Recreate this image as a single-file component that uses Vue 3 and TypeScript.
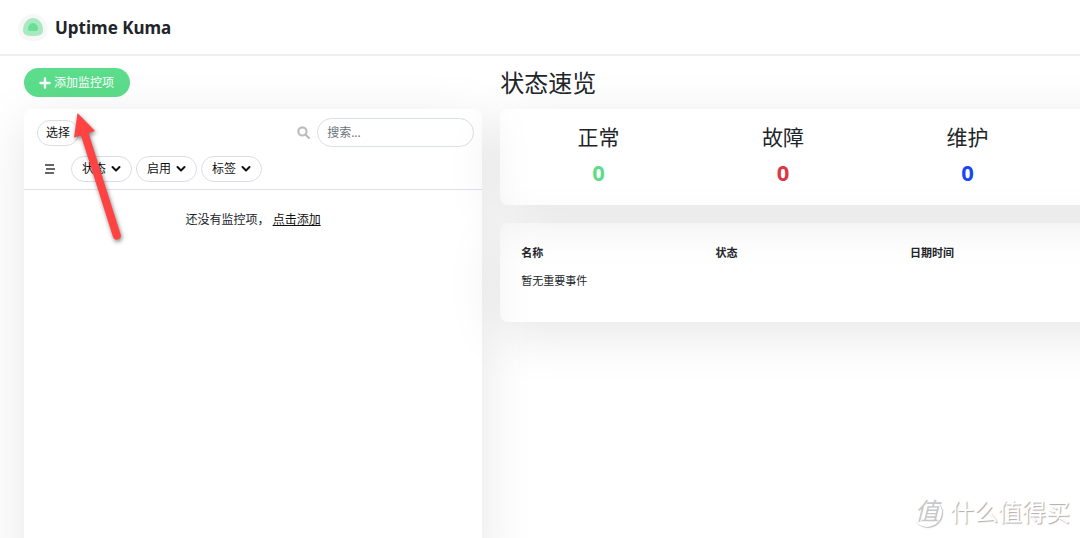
<script setup lang="ts">
import { ref } from 'vue'

interface Stat {
  label: string
  count: number
  tone: string
}

const search = ref('')
const filters: string[] = ['状态', '启用', '标签']
const columns: string[] = ['名称', '状态', '日期时间']
const stats: Stat[] = [
  { label: '正常', count: 0, tone: 'up' },
  { label: '故障', count: 0, tone: 'down' },
  { label: '维护', count: 0, tone: 'maintenance' },
]
</script>

<template>
  <div class="page">
    <header class="topbar">
      <a class="brand" href="#">
        <svg class="logo" viewBox="0 0 30 30" aria-hidden="true">
          <path d="M15 1C23 1 29.500 8 29.500 16C29.500 24 25 28 15 28C5 28 .5 24 .5 16C.5 8 7 1 15 1Z" fill="#f7f7f7" />
          <path d="M15 5C21 5 25 11 25 17C25 21.500 22 23 15 23C8 23 5 21.500 5 17C5 11 9 5 15 5Z" fill="#a9e9c1" />
          <path d="M15 10C18 10 20 13 20 16Q20 18 18 18H12Q10 18 10 16C10 13 12 10 15 10Z" fill="#6be094" />
        </svg>
        <span>Uptime Kuma</span>
      </a>
    </header>

    <main class="workspace">
      <section class="left">
        <button class="add" type="button">
          <svg viewBox="0 0 12 12" aria-hidden="true"><path d="M6 1.500V10.500M1.500 6H10.500" /></svg>
          <span>添加监控项</span>
        </button>

        <div class="card monitors">
          <div class="tools">
            <div class="row">
              <button class="pill select" type="button">选择</button>
              <label class="search">
                <svg viewBox="0 0 12 12" aria-label="搜索"><circle cx="5" cy="5" r="3.800" /><path d="M7.800 7.800L11 11" /></svg>
                <input v-model="search" type="text" placeholder="搜索..." />
              </label>
            </div>
            <div class="row filters">
              <button class="collapse" type="button" aria-label="折叠">
                <svg viewBox="0 0 12 12"><path d="M1 2H10M2 6H11M1 10H10" /></svg>
              </button>
              <button v-for="name in filters" :key="name" class="pill filter" type="button">
                <span>{{ name }}</span>
                <svg viewBox="0 0 10 10" aria-hidden="true"><path d="M1.500 3L5 6.500L8.500 3" /></svg>
              </button>
            </div>
          </div>
          <p class="empty">还没有监控项， <a href="#">点击添加</a></p>
        </div>
      </section>

      <section class="right">
        <h1>状态速览</h1>
        <div class="card stats">
          <div v-for="stat in stats" :key="stat.label" class="stat">
            <h3>{{ stat.label }}</h3>
            <span class="count" :class="stat.tone">{{ stat.count }}</span>
          </div>
        </div>
        <div class="card events">
          <table>
            <colgroup>
              <col v-for="column in columns" :key="column" class="data" />
              <col />
            </colgroup>
            <thead>
              <tr><th v-for="column in columns" :key="column" scope="col">{{ column }}</th></tr>
            </thead>
            <tbody>
              <tr><td colspan="4">暂无重要事件</td></tr>
            </tbody>
          </table>
        </div>
      </section>
    </main>

    <svg class="pointer" viewBox="0 0 60 140" aria-hidden="true">
      <path d="M17.500 13L35 31L28.500 33L60.500 134A4 4 0 0 1 53 137L21 35.500L14 37.500Z" fill="#ff4242" />
    </svg>

    <div class="watermark">
      <span class="seal">值</span>
      <span>什么值得买</span>
    </div>
  </div>
</template>

<style>
body {
  margin: 0;
}
</style>

<style scoped>
.page {
  position: relative;
  height: 100vh;
  overflow: hidden;
  background: #fff;
  color: #212529;
  font-family: "Noto Sans", "Noto Sans CJK SC", sans-serif;
  font-size: 12px;
  line-height: 18px;
}

button,
input {
  box-sizing: border-box;
  font: inherit;
  color: inherit;
}

svg {
  display: block;
  flex: none;
}

.topbar {
  display: flex;
  align-items: center;
  box-sizing: border-box;
  height: 56px;
  padding: 2px 18px 0;
  border-bottom: 2px solid #eee;
}

.brand {
  display: flex;
  align-items: center;
  gap: 7px;
  color: #212529;
  font-size: 17px;
  font-weight: 700;
  line-height: 28px;
  text-decoration: none;
}

.logo {
  width: 30px;
  height: 30px;
}

.workspace {
  display: grid;
  grid-template-columns: 458fr 750fr;
  gap: 18px;
  box-sizing: border-box;
  width: 118%;
  min-height: 100vh;
  padding: 12px 24px;
}

.left {
  display: flex;
  flex-direction: column;
  align-items: flex-start;
  gap: 12px;
}

.card {
  box-sizing: border-box;
  width: 100%;
  border-radius: 8px;
  box-shadow: 0 12px 54px rgba(0, 0, 0, 0.1);
}

.add {
  display: flex;
  align-items: center;
  gap: 3px;
  height: 29px;
  padding: 0 16px 0 15px;
  border: 0;
  border-radius: 15px;
  background: #5cdd8b;
  color: #fff;
}

.add svg {
  width: 12px;
  height: 12px;
  fill: none;
  stroke: currentColor;
  stroke-width: 2.4;
  stroke-linecap: round;
}

.monitors {
  flex: 1;
}

.tools {
  display: flex;
  flex-direction: column;
  gap: 9px;
  padding: 9px 8px 7px 13px;
  border-bottom: 1px solid #dee2e6;
}

.row {
  display: flex;
  align-items: center;
  justify-content: space-between;
}

.pill {
  height: 26px;
  border: 1px solid #dadee3;
  border-radius: 13px;
  background: transparent;
  color: #111;
}

.select {
  padding: 0 8px;
}

.search {
  display: flex;
  align-items: center;
  gap: 7px;
}

.search svg {
  width: 13px;
  height: 13px;
  fill: none;
  stroke: #bcbcbc;
  stroke-width: 2;
  stroke-linecap: round;
}

.search input {
  width: 157px;
  height: 29px;
  padding: 0 9px;
  border: 1px solid #dadfe5;
  border-radius: 15px;
  outline: 0;
  background: transparent;
}

.search input::placeholder {
  color: #6c757d;
  opacity: 1;
}

.filters {
  justify-content: flex-start;
  gap: 4px;
}

.collapse {
  display: flex;
  align-items: center;
  justify-content: center;
  width: 26px;
  height: 26px;
  margin-right: 4px;
  padding: 0;
  border: 0;
  background: transparent;
}

.collapse svg {
  width: 12px;
  height: 12px;
  fill: none;
  stroke: #666;
  stroke-width: 2;
}

.filter {
  display: flex;
  align-items: center;
  gap: 5px;
  padding: 0 10px;
}

.filter svg {
  width: 10px;
  height: 10px;
  fill: none;
  stroke: #111;
  stroke-width: 2;
  stroke-linecap: round;
  stroke-linejoin: round;
}

.empty {
  margin: 21px 0;
  text-align: center;
}

.empty a {
  color: #111;
}

h1 {
  margin: 0 0 11px;
  font-size: 24px;
  font-weight: 400;
  line-height: 30px;
}

.stats {
  display: grid;
  grid-template-columns: repeat(4, 1fr);
  padding: 15px 6px 17px;
  text-align: center;
}

h3 {
  margin: 0 0 6px;
  font-size: 21px;
  font-weight: 400;
  line-height: 26px;
}

.count {
  display: block;
  font-size: 22px;
  font-weight: 700;
  line-height: 32px;
}

.up {
  color: #5cdd8b;
}

.down {
  color: #dc3545;
}

.maintenance {
  color: #1747f5;
}

.events {
  margin-top: 18px;
  padding: 16px 15px 27px;
}

table {
  width: 100%;
  border-collapse: collapse;
  table-layout: fixed;
  font-size: 11px;
}

.data {
  width: 27%;
}

th,
td {
  padding: 5px 6px;
  font-weight: 400;
  text-align: left;
}

th {
  font-weight: 700;
}

.pointer {
  position: absolute;
  top: 100px;
  left: 60px;
  width: 60px;
  height: 140px;
  overflow: visible;
  filter: drop-shadow(1px 2px 2px rgba(0, 0, 0, 0.5));
}

.watermark {
  position: absolute;
  right: 10px;
  bottom: 9px;
  display: flex;
  align-items: center;
  gap: 8px;
  color: #fff;
  font-size: 24px;
  line-height: 34px;
  text-shadow: 1px 1px 1px #aaa;
}

.seal {
  width: 30px;
  height: 30px;
  border-radius: 50%;
  box-shadow: 1px 1px 1px #bbb;
  color: #c8c8c8;
  font-style: italic;
  line-height: 28px;
  text-align: center;
  text-shadow: none;
}
</style>
